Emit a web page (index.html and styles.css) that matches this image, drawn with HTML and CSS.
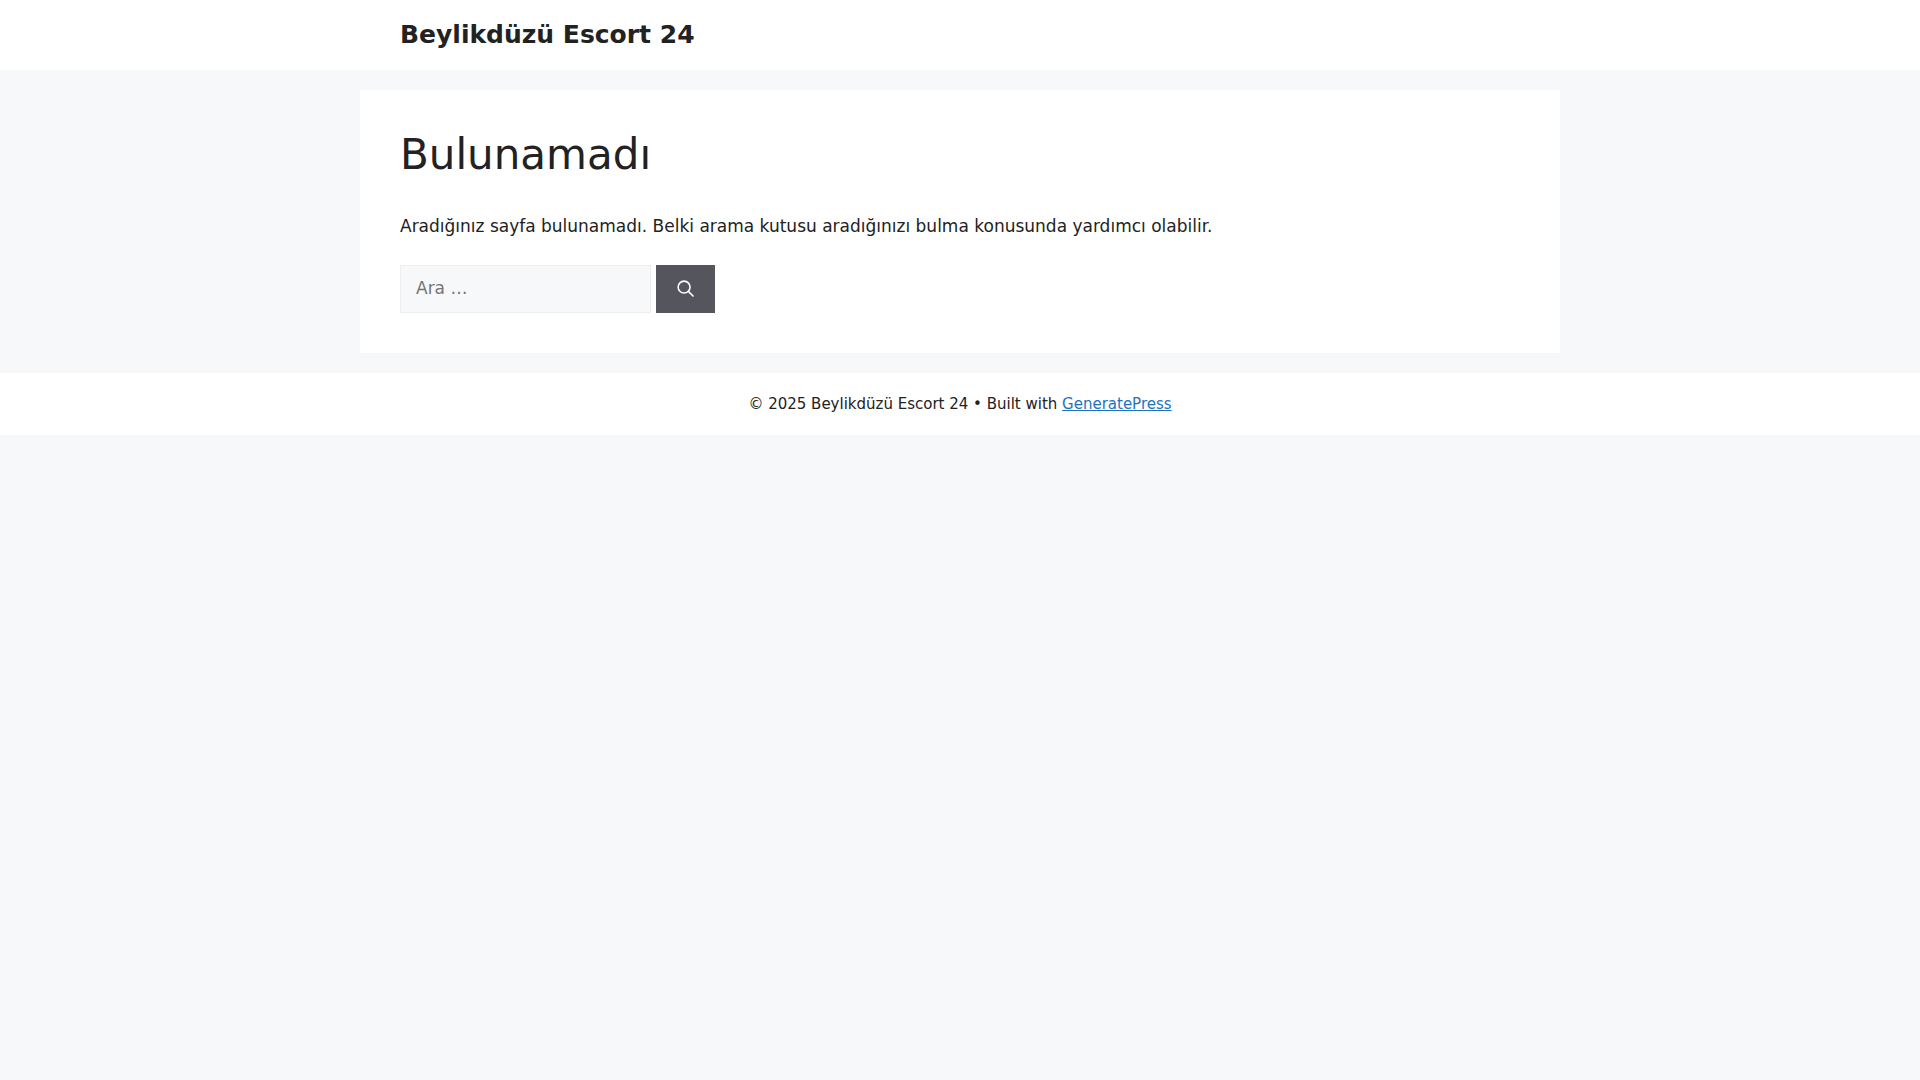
FILE: index.html
```html
<!DOCTYPE html>
<html lang="tr">
<head>
    <meta charset="UTF-8">
    <title>Beylikdüzü Escort 24</title>
    <link rel="stylesheet" href="styles.css">
</head>
<body>
    <header class="site-header">
        <div class="inside-header">
            <a class="site-title" href="#">Beylikdüzü Escort 24</a>
        </div>
    </header>

    <div class="site-content">
        <main class="content-box">
            <h1>Bulunamadı</h1>
            <p>Aradığınız sayfa bulunamadı. Belki arama kutusu aradığınızı bulma konusunda yardımcı olabilir.</p>
            <form class="search-form">
                <input class="search-field" type="search" placeholder="Ara …">
                <button class="search-submit" type="button" aria-label="Ara">
                    <svg viewBox="0 0 18 18" width="17" height="17" fill="none" stroke="currentColor" stroke-width="1.7" stroke-linecap="round"><circle cx="7.5" cy="7.5" r="6.3"/><path d="M12 12l5 5"/></svg>
                </button>
            </form>
        </main>
    </div>

    <footer class="site-footer">
        <span>© 2025 Beylikdüzü Escort 24 • Built with <a href="#">GeneratePress</a></span>
    </footer>
</body>
</html>
```

FILE: styles.css
```css
body {
    margin: 0;
    background-color: #f7f8f9;
    color: #222222;
    font-family: "DejaVu Sans", sans-serif;
    font-size: 17px;
    line-height: 1.5;
}
.site-header {
    background: white;
}
.inside-header {
    width: 1200px;
    margin: 0 auto;
    padding: 20px 40px;
    height: 70px;
    box-sizing: border-box;
    display: flex;
    align-items: center;
}
.site-title {
    font-size: 25px;
    font-weight: bold;
    color: #222222;
    text-decoration: none;
}
.site-content {
    width: 1200px;
    margin: 20px auto;
}
.content-box {
    background: white;
    padding: 40px;
}
h1 {
    margin: 0 0 34px;
    font-size: 42px;
    font-weight: 400;
    line-height: 1.2;
}
p {
    margin: 0 0 25px;
    font-size: 17px;
}
.search-form {
    display: flex;
}
.search-field {
    width: 251px;
    height: 48px;
    box-sizing: border-box;
    padding: 9px 15px 11px;
    border: 1px solid #eeeeee;
    background: #f7f8f9;
    font-family: inherit;
    font-size: 17px;
    color: #666666;
    outline: none;
}
.search-field::placeholder {
    color: #757575;
}
.search-submit {
    width: 59px;
    height: 48px;
    margin-left: 5px;
    border: none;
    background: #55555e;
    color: white;
    display: flex;
    align-items: center;
    justify-content: center;
    padding: 0 0 1px;
}
.site-footer {
    background: white;
    padding: 20px;
    text-align: center;
    font-size: 15px;
}
.site-footer a {
    color: #1e73be;
}
```
